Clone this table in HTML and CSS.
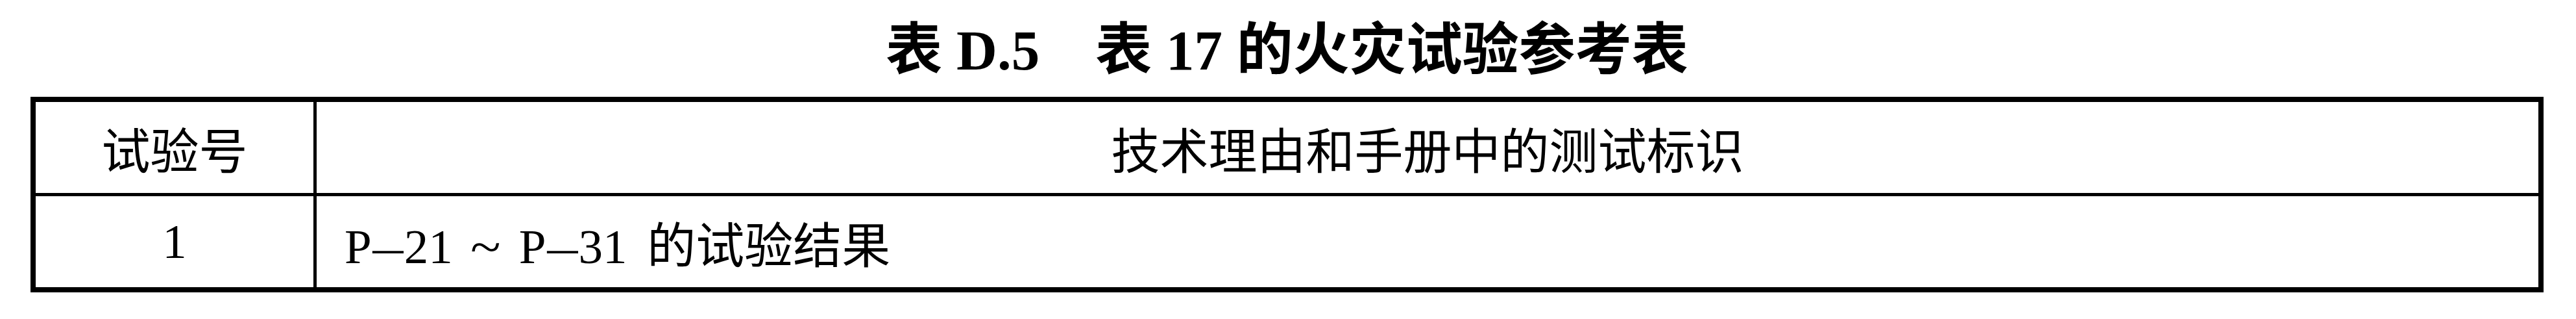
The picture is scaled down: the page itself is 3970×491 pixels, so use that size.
FILE: index.html
```html
<!DOCTYPE html>
<html lang="zh-CN">
<head>
<meta charset="utf-8">
<title>表 D.5 表 17 的火灾试验参考表</title>
<link rel="stylesheet" href="styles.css">
</head>
<body>
<div class="page">
  <h1 class="title">表 D.5<span class="gap"></span>表 17 的火灾试验参考表</h1>
  <div class="table">
    <div class="cell head">试验号</div>
    <div class="cell head">技术理由和手册中的测试标识</div>
    <div class="cell">1</div>
    <div class="cell left"><span class="txt">P<span class="dash">–</span>21 <span class="tilde">~</span> P<span class="dash">–</span>31 的试验结果</span></div>
  </div>
</div>
</body>
</html>
```
FILE: styles.css
```css
html, body {
  margin: 0;
  padding: 0;
  background: #ffffff;
}

.page {
  width: 3970px;
  height: 491px;
  padding-top: 28px;
  box-sizing: border-box;
}

.title {
  margin: 0 0 21px 47px;
  width: 3873px;
  height: 100px;
  line-height: 100px;
  text-align: center;
  font-family: "Liberation Serif", "Noto Sans CJK SC", serif;
  font-weight: 700;
  font-size: 87px;
  color: #000;
  white-space: nowrap;
}

.gap {
  display: inline-block;
  width: 86px;
}

.table {
  margin-left: 47px;
  width: 3873px;
  box-sizing: border-box;
  border: 8px solid #000;
  background: #000;
  display: grid;
  grid-template-columns: 428px 1fr;
  grid-template-rows: 140px 140px;
  column-gap: 5px;
  row-gap: 5px;
}

.cell {
  background: #fff;
  display: flex;
  align-items: center;
  justify-content: center;
  font-family: "Liberation Serif", "Noto Sans CJK SC", serif;
  font-weight: 400;
  font-size: 75px;
  color: #000;
  white-space: nowrap;
}

.cell.left {
  justify-content: flex-start;
  padding-left: 43px;
}

.txt {
  word-spacing: 12px;
}

.dash {
  display: inline-block;
  width: 50px;
  text-align: center;
  transform: scaleX(1.25);
}

.tilde {
  display: inline-block;
  transform: scaleX(1.15);
}
```
